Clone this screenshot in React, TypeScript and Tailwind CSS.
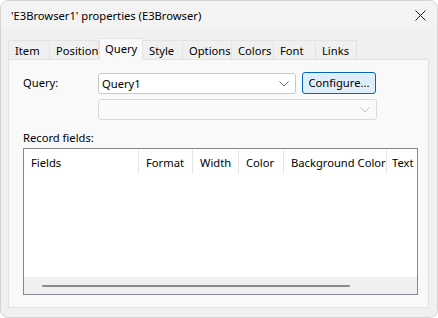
import React from "react";

const tabs = ["Item", "Position", "Query", "Style", "Options", "Colors", "Font", "Links"];
const tabWidths = [42, 49, 44, 40, 49, 42, 42, 41];

const cols = [
  { name: "Fields", w: 115 },
  { name: "Format", w: 54 },
  { name: "Width", w: 46 },
  { name: "Color", w: 45 },
  { name: "Background Color", w: 103 },
  { name: "Text", w: 40 },
];

function Chevron({ color = "#5f5f5f" }: { color?: string }) {
  return (
    <svg width="10" height="6" viewBox="0 0 10 6" fill="none">
      <path d="M0.5 0.5 L5 5 L9.5 0.5" stroke={color} strokeWidth="1" />
    </svg>
  );
}

export default function App() {
  return (
    <div
      className="w-[438px] h-[318px] bg-white text-[11.2px] text-black leading-none"
      style={{ fontFamily: '"Noto Sans", "Open Sans", sans-serif' }}
    >
      <div className="w-[438px] h-[318px] rounded-[8px] border border-[#d4d4d4] bg-[#f0f0f0] overflow-hidden flex flex-col">
        {/* Title bar */}
        <div className="h-[29px] flex items-center justify-between pl-[10px] pr-[10px] bg-[#f3f3f3]">
          <span>'E3Browser1' properties (E3Browser)</span>
          <svg width="11" height="11" viewBox="0 0 11 11" className="mr-[1px]">
            <path d="M0.5 0.5 L10.5 10.5 M10.5 0.5 L0.5 10.5" stroke="#1a1a1a" strokeWidth="1" />
          </svg>
        </div>
        {/* Tabs */}
        <div className="pl-[7px] pt-[7px] flex items-end h-[29px] relative z-10">
          {tabs.map((t, i) => {
            const sel = t === "Query";
            return (
              <div
                key={t}
                style={{ width: tabWidths[i] }}
                className={
                  sel
                    ? "h-[22px] bg-[#f9f9f9] border border-[#e3e3e3] border-b-0 flex items-center pl-[5px] mb-[-1px] pb-[2px] whitespace-nowrap"
                    : "h-[19px] bg-[#f0f0f0] border-t border-r border-[#e3e3e3] first:border-l flex items-center pl-[6px] pt-[2px] whitespace-nowrap"
                }
              >
                {t}
              </div>
            );
          })}
        </div>
        {/* Panel */}
        <div className="ml-[7px] w-[421px] h-[249px] bg-[#f9f9f9] border border-[#e3e3e3] pl-[14px] pt-[12px]">
          <div className="flex items-start">
            <span className="w-[75px] pt-[5px]">Query:</span>
            <div className="w-[198px] h-[21px] mt-[1px] bg-white border border-[#c8c8c8] rounded-[3px] flex items-center justify-between pl-[3px] pr-[6px]">
              <span>Query1</span>
              <Chevron />
            </div>
            <div className="ml-[6px] w-[74px] h-[22px] rounded-[3px] border border-[#0067c0] bg-[#e0eef9] flex items-center justify-center">
              Configure...
            </div>
          </div>
          <div className="ml-[75px] mt-[5px] w-[279px] h-[21px] bg-[#fafafa] border border-[#d9d9d9] rounded-[3px] flex items-center justify-end pr-[6px]">
            <Chevron color="#c0c0c0" />
          </div>
          <div className="mt-[12px] h-[12px] flex items-center">Record fields:</div>
          <div className="mt-[4px] w-[395px] h-[147px] border border-[#828790] bg-white flex flex-col">
            <div className="h-[25px] flex overflow-hidden">
              {cols.map((c, i) => (
                <div
                  key={c.name}
                  style={{ width: c.w, minWidth: c.w }}
                  className={
                    i < cols.length - 1
                      ? "h-[25px] flex items-center pl-[7px] border-r border-[#e5e5e5] mt-[1px] whitespace-nowrap"
                      : "h-[25px] flex items-center pl-[5px] mt-[1px] whitespace-nowrap"
                  }
                >
                  {c.name}
                </div>
              ))}
            </div>
            <div className="flex-1" />
            <div className="h-[17px] bg-[#f0f0f0] flex items-center pl-[18px]">
              <div className="w-[308px] h-[2px] bg-[#8a8a8a] rounded-full" />
            </div>
          </div>
        </div>
      </div>
    </div>
  );
}
